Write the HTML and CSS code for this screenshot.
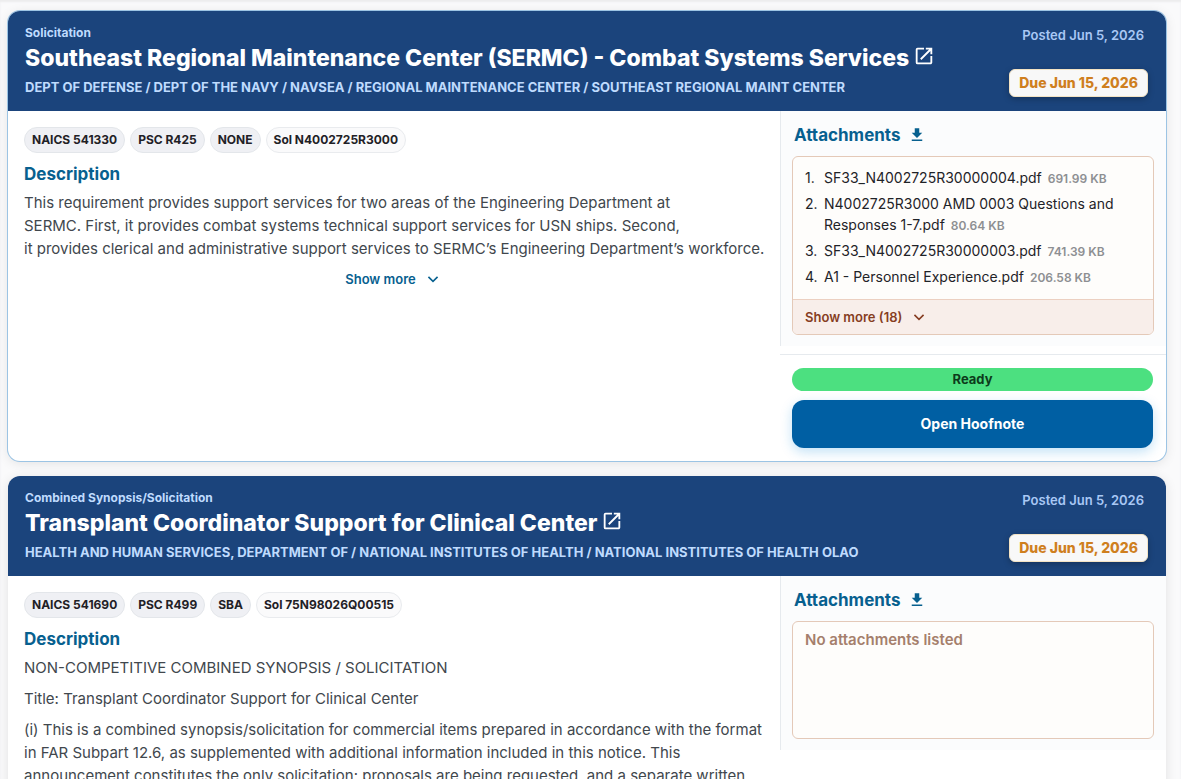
FILE: index.html
```html
<!DOCTYPE html>
<html lang="en">
<head>
<meta charset="utf-8">
<meta name="viewport" content="width=device-width, initial-scale=1">
<title>Opportunities</title>
<link rel="stylesheet" href="styles.css">
</head>
<body>
<svg class="sprite" aria-hidden="true">
  <symbol id="icon-open" viewBox="0 0 24 24"><path d="M19 19H5V5h7V3H5a2 2 0 0 0-2 2v14a2 2 0 0 0 2 2h14c1.100 0 2-.9 2-2v-7h-2v7zM14 3v2h3.590l-9.830 9.830 1.410 1.410L19 6.410V10h2V3h-7z"/></symbol>
  <symbol id="icon-download" viewBox="0 0 24 24"><path d="M19 9h-4V3H9v6H5l7 7 7-7zM5 18v2h14v-2H5z"/></symbol>
  <symbol id="icon-chevron" viewBox="0 0 24 24"><path d="M6 8 12 14l6-6 1.700 1.700L12 17.400 4.300 9.700z"/></symbol>
</svg>
<main class="results">
  <article class="card card-active">
    <header class="card-header">
      <div class="heading">
        <p class="notice-type">Solicitation</p>
        <h2 class="title"><a class="title-link" href="#sermc">Southeast Regional Maintenance Center (SERMC) - Combat Systems Services<svg class="icon-open" aria-hidden="true"><use href="#icon-open"/></svg></a></h2>
        <p class="agency">DEPT OF DEFENSE / DEPT OF THE NAVY / NAVSEA / REGIONAL MAINTENANCE CENTER / SOUTHEAST REGIONAL MAINT CENTER</p>
      </div>
      <div class="dates">
        <span class="posted">Posted Jun 5, 2026</span>
        <span class="due">Due Jun 15, 2026</span>
      </div>
    </header>
    <div class="card-body">
      <section class="details">
        <ul class="chips">
          <li class="chip">NAICS 541330</li>
          <li class="chip">PSC R425</li>
          <li class="chip">NONE</li>
          <li class="chip chip-light">Sol N4002725R3000</li>
        </ul>
        <h3 class="section-title">Description</h3>
        <div class="description">
          <p>This requirement provides support services for two areas of the Engineering Department at<br>SERMC. First, it provides combat systems technical support services for USN ships. Second,<br>it provides clerical and administrative support services to SERMC’s Engineering Department’s workforce.</p>
        </div>
        <button class="more" type="button">Show more<svg class="icon-chevron" aria-hidden="true"><use href="#icon-chevron"/></svg></button>
      </section>
      <aside class="side">
        <section class="attachments">
          <h3 class="section-title attachments-title">Attachments<svg class="icon-download" aria-hidden="true"><use href="#icon-download"/></svg></h3>
          <div class="files">
            <ol class="file-list">
              <li class="file"><span class="file-text"><a class="file-link" href="#f1">SF33_N4002725R30000004.pdf</a><span class="size">691.99 KB</span></span></li>
              <li class="file"><span class="file-text"><a class="file-link" href="#f2">N4002725R3000 AMD 0003 Questions and Responses 1-7.pdf</a><span class="size">80.64 KB</span></span></li>
              <li class="file"><span class="file-text"><a class="file-link" href="#f3">SF33_N4002725R30000003.pdf</a><span class="size">741.39 KB</span></span></li>
              <li class="file"><span class="file-text"><a class="file-link" href="#f4">A1 - Personnel Experience.pdf</a><span class="size">206.58 KB</span></span></li>
            </ol>
            <button class="files-more" type="button">Show more (18)<svg class="icon-chevron" aria-hidden="true"><use href="#icon-chevron"/></svg></button>
          </div>
        </section>
        <div class="actions">
          <span class="status">Ready</span>
          <button class="primary" type="button">Open Hoofnote</button>
        </div>
      </aside>
    </div>
  </article>

  <article class="card">
    <header class="card-header">
      <div class="heading">
        <p class="notice-type">Combined Synopsis/Solicitation</p>
        <h2 class="title"><a class="title-link" href="#transplant">Transplant Coordinator Support for Clinical Center<svg class="icon-open" aria-hidden="true"><use href="#icon-open"/></svg></a></h2>
        <p class="agency">HEALTH AND HUMAN SERVICES, DEPARTMENT OF / NATIONAL INSTITUTES OF HEALTH / NATIONAL INSTITUTES OF HEALTH OLAO</p>
      </div>
      <div class="dates">
        <span class="posted">Posted Jun 5, 2026</span>
        <span class="due">Due Jun 15, 2026</span>
      </div>
    </header>
    <div class="card-body">
      <section class="details">
        <ul class="chips">
          <li class="chip">NAICS 541690</li>
          <li class="chip">PSC R499</li>
          <li class="chip">SBA</li>
          <li class="chip chip-light">Sol 75N98026Q00515</li>
        </ul>
        <h3 class="section-title">Description</h3>
        <div class="description">
          <p>NON-COMPETITIVE COMBINED SYNOPSIS / SOLICITATION</p>
          <p>Title: Transplant Coordinator Support for Clinical Center</p>
          <p>(i) This is a combined synopsis/solicitation for commercial items prepared in accordance with the format<br>in FAR Subpart 12.6, as supplemented with additional information included in this notice. This<br>announcement constitutes the only solicitation; proposals are being requested, and a separate written</p>
        </div>
      </section>
      <aside class="side">
        <section class="attachments">
          <h3 class="section-title attachments-title">Attachments<svg class="icon-download" aria-hidden="true"><use href="#icon-download"/></svg></h3>
          <div class="files files-empty">
            <p class="empty">No attachments listed</p>
          </div>
        </section>
      </aside>
    </div>
  </article>
</main>
</body>
</html>
```
FILE: styles.css
```css
* { box-sizing: border-box; }

body {
  margin: 0;
  height: 100vh;
  overflow: hidden;
  background: #fafafb;
  color: #1f2328;
  font-family: Inter, "Liberation Sans", sans-serif;
  font-size: 14px;
}

h2, h3, p, ul, ol { margin: 0; padding: 0; }
ul, ol { list-style: none; }
a { color: inherit; text-decoration: none; }
button { font: inherit; border: 0; background: none; cursor: pointer; }
svg { fill: currentColor; flex: none; }
.sprite { display: none; }

.results {
  display: flex;
  flex-direction: column;
  gap: 15px;
  padding: 11px 15px 0 8px;
  box-shadow: inset 0 2px 2px #ededee;
}

.card {
  border-radius: 12px;
  background: #fff;
  box-shadow: 0 2px 12px rgba(0, 0, 0, 0.1);
  overflow: hidden;
}
.card-active { box-shadow: 0 0 0 1px #9cc4e4, 0 2px 12px rgba(0, 0, 0, 0.1); }

.card-header {
  display: flex;
  justify-content: space-between;
  gap: 16px;
  padding: 14px 18px 14px 17px;
  background: #1b447c;
  color: #bfdbfe;
}
.heading { min-height: 72px; }
.notice-type { font-size: 12px; line-height: 16px; font-weight: 700; }
.title {
  margin-top: 2px;
  color: #fff;
  font-size: 23px;
  line-height: 30px;
  font-weight: 800;
}
.title-link { display: flex; align-items: center; gap: 4px; }
.icon-open { width: 22px; height: 22px; margin-bottom: 4px; }
.agency {
  margin-top: 5px;
  font-size: 13px;
  line-height: 18px;
  font-weight: 700;
}
.dates {
  display: flex;
  flex-direction: column;
  align-items: flex-end;
  justify-content: space-between;
  white-space: nowrap;
}
.posted { padding: 1px 4px 0 0; color: #a9c8f5; font-size: 13px; line-height: 18px; font-weight: 600; }
.due {
  padding: 4px 9px;
  border: 1px solid #f3e3c4;
  border-radius: 6px;
  background: #f8f8f8;
  color: #cf7f1e;
  font-size: 14px;
  line-height: 18px;
  font-weight: 800;
  box-shadow: 0 2px 6px rgba(0, 0, 0, 0.25);
}

.card-body {
  display: grid;
  grid-template-columns: minmax(0, 2fr) minmax(0, 1fr);
}
.details { padding: 16px 18px 16px 16px; }
.chips { display: flex; flex-wrap: wrap; gap: 5px; }
.chip {
  padding: 4px 7px;
  border: 1px solid #e3e6ea;
  border-radius: 13px;
  background: #eff0f4;
  color: #1f2126;
  font-size: 12px;
  line-height: 16px;
  font-weight: 700;
}
.chip-light { background: #fafafb; border-color: #e9ebee; }
.section-title {
  margin-top: 9px;
  color: #07608f;
  font-size: 17px;
  line-height: 24px;
  font-weight: 700;
}
.description {
  display: flex;
  flex-direction: column;
  gap: 8px;
  margin-top: 5px;
  color: #41474d;
  font-size: 15px;
  line-height: 23px;
  white-space: nowrap;
}
.more {
  display: flex;
  align-items: center;
  gap: 9px;
  margin: 7px auto 0;
  padding: 4px;
  color: #07608f;
  font-size: 13px;
  line-height: 16px;
  font-weight: 600;
}
.icon-chevron { width: 16px; height: 16px; }

.side { display: flex; flex-direction: column; }
.attachments {
  padding: 12px 12px 11px 11px;
  border-left: 1px solid #e6eaee;
  background: #fbfcfd;
}
.attachments-title { display: flex; align-items: center; gap: 8px; margin: 0; padding-left: 2px; }
.icon-download { width: 18px; height: 18px; }
.files {
  margin-top: 9px;
  border: 1px solid #e4c9b8;
  border-radius: 6px;
  background: #fefdfb;
  overflow: hidden;
}
.file-list {
  display: flex;
  flex-direction: column;
  gap: 5px;
  padding: 10px 12px 12px;
  counter-reset: file;
  font-size: 14px;
  line-height: 21px;
}
.file { display: flex; counter-increment: file; }
.file::before { content: counter(file) "."; width: 19px; flex: none; }
.size { margin-left: 6px; color: #8d8f92; font-size: 12px; line-height: 16px; font-weight: 600; }
.files-more {
  display: flex;
  align-items: center;
  gap: 9px;
  width: 100%;
  padding: 9px 12px;
  border-top: 1px solid #ecd0c1;
  background: #f8eeea;
  color: #863d22;
  font-size: 13px;
  line-height: 16px;
  font-weight: 600;
}
.files-empty { min-height: 118px; padding: 9px 12px; }
.empty { color: #a57f6c; font-size: 15px; line-height: 18px; font-weight: 600; }

.actions {
  display: flex;
  flex-direction: column;
  gap: 9px;
  margin-top: 8px;
  padding: 13px 13px 13px 12px;
  border-top: 1px solid #e6eaee;
}
.status {
  padding: 3px;
  border-radius: 12px;
  background: #4ce080;
  color: #0d3b1b;
  font-size: 13px;
  line-height: 17px;
  font-weight: 700;
  text-align: center;
}
.primary {
  padding: 14px;
  border-radius: 12px;
  background: #005fa3;
  color: #fff;
  font-size: 14px;
  line-height: 20px;
  font-weight: 700;
  box-shadow: 0 4px 12px rgba(14, 140, 220, 0.25);
}
```
